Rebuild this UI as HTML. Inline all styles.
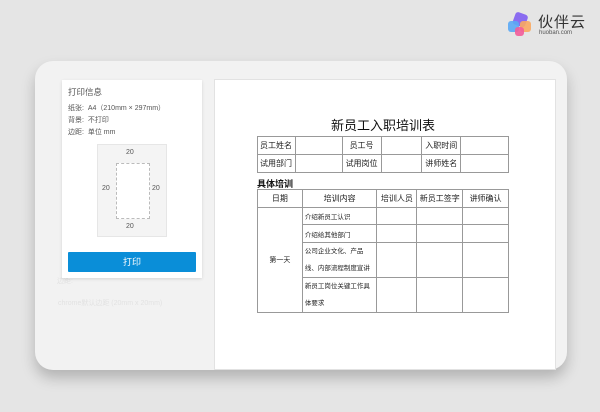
<!DOCTYPE html>
<html><head><meta charset="utf-8"><style>
*{margin:0;padding:0;box-sizing:border-box}
body{width:600px;height:412px;background:#e5e5e5;font-family:"Liberation Sans","Noto Sans CJK SC",sans-serif;position:relative;overflow:hidden}
.card{position:absolute;left:35px;top:61px;width:532px;height:309px;background:#f2f2f2;border-radius:18px;box-shadow:0 8px 14px rgba(0,0,0,.22);overflow:hidden}
.paper{position:absolute;left:214px;top:79px;width:342px;height:291px;background:#fff;border:1px solid #e2e2e2}
.lp{position:absolute;left:62px;top:80px;width:140px;height:198px;background:#fff;box-shadow:0 1px 3px rgba(0,0,0,.12)}
.t{position:absolute;font-size:8px;color:#555;white-space:nowrap}
.btn{position:absolute;left:6px;top:172px;width:128px;height:20px;background:#0a8ed8;color:#fff;font-size:9px;text-align:center;line-height:20px;border-radius:1px}
.box{position:absolute;left:35px;top:64px;width:70px;height:93px;background:#f4f4f4;border:1px solid #e6e6e6}
.in{position:absolute;left:18px;top:18px;width:34px;height:56px;background:#fff;border:1px dashed #bbb}
table{position:absolute;border-collapse:collapse;font-size:8px;color:#222}
td{border:1px solid #999;padding:0 2px}
.ghost{position:absolute;font-size:7px;color:#e2e2e2}
</style></head><body>
<div class="card"></div>
<div class="ghost" style="left:58px;top:298px">chrome默认边距 (20mm x 20mm)</div>
<div class="ghost" style="left:57px;top:276px">边距:</div>
<div class="paper"></div>
<div class="lp">
<div class="t" style="left:6px;top:6px;font-size:8.5px">打印信息</div>
<div class="t" style="left:6px;top:23px;font-size:7px">纸张:&nbsp; A4（210mm × 297mm）</div>
<div class="t" style="left:6px;top:35px;font-size:7px">背景:&nbsp; 不打印</div>
<div class="t" style="left:6px;top:47px;font-size:7px">边距:&nbsp; 单位 mm</div>
<div class="box"><div class="in"></div>
<div class="t" style="left:28px;top:4px;font-size:7px">20</div>
<div class="t" style="left:28px;top:78px;font-size:7px">20</div>
<div class="t" style="left:4px;top:40px;font-size:7px">20</div>
<div class="t" style="left:54px;top:40px;font-size:7px">20</div>
</div>
<div class="btn">打印</div>
</div>
<div style="position:absolute;left:255px;top:115px;width:256px;text-align:center;font-size:13px;color:#111">新员工入职培训表</div>
<table style="left:257px;top:136px;width:252px">
<colgroup><col style="width:38px"><col style="width:47px"><col style="width:39px"><col style="width:41px"><col style="width:39px"><col style="width:48px"></colgroup>
<tr style="height:18px"><td>员工姓名</td><td></td><td style="text-align:center">员工号</td><td></td><td style="text-align:center">入职时间</td><td></td></tr>
<tr style="height:18px"><td>试用部门</td><td></td><td style="text-align:center">试用岗位</td><td></td><td style="text-align:center">讲师姓名</td><td></td></tr>
</table>
<div style="position:absolute;left:257px;top:177px;font-size:9px;color:#111;font-weight:bold">具体培训</div>
<table style="left:257px;top:189px;width:252px">
<colgroup><col style="width:45px"><col style="width:75px"><col style="width:40px"><col style="width:46px"><col style="width:46px"></colgroup>
<tr style="height:18px;text-align:center"><td>日期</td><td>培训内容</td><td>培训人员</td><td>新员工签字</td><td>讲师确认</td></tr>
<tr style="height:17px;font-size:6.5px"><td rowspan="4" style="text-align:center;font-size:7px">第一天</td><td>介绍新员工认识</td><td></td><td></td><td></td></tr>
<tr style="height:18px;font-size:6.5px"><td>介绍给其他部门</td><td></td><td></td><td></td></tr>
<tr style="height:34px;font-size:6.5px"><td style="line-height:17px">公司企业文化、产品<br>线、内部流程制度宣讲</td><td></td><td></td><td></td></tr>
<tr style="height:34px;font-size:6.5px"><td style="line-height:17px">新员工岗位关键工作具<br>体要求</td><td></td><td></td><td></td></tr>
</table>
<svg style="position:absolute;left:507px;top:12px" width="30" height="26" viewBox="0 0 30 26">
<rect x="7" y="1" width="13" height="13" rx="3" transform="rotate(20 13 7)" fill="#8a6cf0"/>
<rect x="1" y="9" width="11" height="11" rx="3" fill="#5aa9f5" opacity=".9"/>
<rect x="13" y="9" width="11" height="11" rx="3" fill="#f9a860" opacity=".9"/>
<rect x="8" y="15" width="9" height="9" rx="3" fill="#f25c9a" opacity=".9"/>
</svg>
<div style="position:absolute;left:538px;top:11px;font-size:15px;color:#333;letter-spacing:1px">伙伴云</div>
<div style="position:absolute;left:539px;top:30px;font-size:6px;color:#555">huoban.com</div>
</body></html>
